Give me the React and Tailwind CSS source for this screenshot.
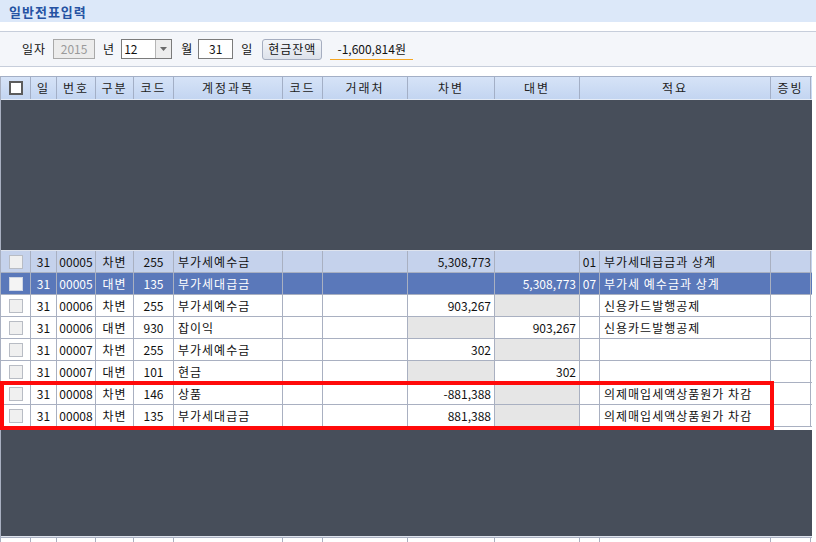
import React from "react";

const COLS =
  "grid grid-cols-[30px_26px_39px_38px_40px_109px_40px_85px_87px_85px_20px_171px_40px]";

const rows = [
  { d: "31", no: "00005", k: "차변", c: "255", acc: "부가세예수금", dr: "5,308,773", cr: "", rc: "01", memo: "부가세대급금과 상계", kind: "light" },
  { d: "31", no: "00005", k: "대변", c: "135", acc: "부가세대급금", dr: "", cr: "5,308,773", rc: "07", memo: "부가세 예수금과 상계", kind: "sel" },
  { d: "31", no: "00006", k: "차변", c: "255", acc: "부가세예수금", dr: "903,267", cr: "", rc: "", memo: "신용카드발행공제", kind: "n" },
  { d: "31", no: "00006", k: "대변", c: "930", acc: "잡이익", dr: "", cr: "903,267", rc: "", memo: "신용카드발행공제", kind: "n" },
  { d: "31", no: "00007", k: "차변", c: "255", acc: "부가세예수금", dr: "302", cr: "", rc: "", memo: "", kind: "n" },
  { d: "31", no: "00007", k: "대변", c: "101", acc: "현금", dr: "", cr: "302", rc: "", memo: "", kind: "n" },
  { d: "31", no: "00008", k: "차변", c: "146", acc: "상품", dr: "-881,388", cr: "", rc: "", memo: "의제매입세액상품원가 차감", kind: "n" },
  { d: "31", no: "00008", k: "차변", c: "135", acc: "부가세대급금", dr: "881,388", cr: "", rc: "", memo: "의제매입세액상품원가 차감", kind: "n" },
];

function Cell({ children, align = "center", gray = false, ko = false }) {
  const a =
    align === "right"
      ? "justify-end pr-[3px]"
      : align === "left"
      ? "justify-start pl-[4px]"
      : "justify-center";
  return (
    <div
      className={`h-full flex items-center border-r border-[#a9b0c1] whitespace-nowrap overflow-hidden ${a} ${
        gray ? "bg-[#e6e6e6]" : ""
      } ${ko ? "tracking-[1px]" : ""}`}
    >
      {children}
    </div>
  );
}

function Row({ r }) {
  const bg =
    r.kind === "light"
      ? "bg-[#c5d2ec] text-[#111]"
      : r.kind === "sel"
      ? "bg-[#5a78ba] text-white"
      : "bg-white text-[#111]";
  const plain = r.kind === "n";
  return (
    <div className={`${COLS} h-[22px] border-b border-[#a9b0c1] ${bg}`}>
      <Cell>
        <span
          className={`w-[14px] h-[14px] border block ${
            r.kind === "sel" ? "border-[#d0d6e4] bg-[#f4f4f4]" : "border-[#b8bcc4] bg-[#f0f0f0]"
          }`}
        />
      </Cell>
      <Cell>{r.d}</Cell>
      <Cell>{r.no}</Cell>
      <Cell ko>{r.k}</Cell>
      <Cell>{r.c}</Cell>
      <Cell align="left" ko>
        {r.acc}
      </Cell>
      <Cell />
      <Cell />
      <Cell align="right" gray={plain && r.dr === ""}>
        {r.dr}
      </Cell>
      <Cell align="right" gray={plain && r.cr === ""}>
        {r.cr}
      </Cell>
      <Cell>{r.rc}</Cell>
      <Cell align="left" ko>
        {r.memo}
      </Cell>
      <Cell />
    </div>
  );
}

function HeadCell({ children, span2 = false }) {
  return (
    <div
      className={`h-full flex items-center justify-center border-r border-[#a3afc6] tracking-[2px] ${
        span2 ? "col-span-2" : ""
      }`}
    >
      {children}
    </div>
  );
}

export default function App() {
  return (
    <div className="w-[816px] h-[542px] overflow-hidden bg-white font-['Noto_Sans_CJK_KR',sans-serif] text-[12px] leading-none text-[#111]">
      {/* title bar */}
      <div className="h-[22px] bg-[#dce8f9] flex items-center pl-[9px]">
        <span className="text-[13px] font-bold text-[#2553a3] tracking-[1px]">일반전표입력</span>
      </div>
      <div className="h-[9px]" />
      {/* toolbar */}
      <div className="h-[36px] bg-[#f4f6fa] border-y border-[#c7cedb] flex items-center pl-[22px]">
        <span className="tracking-[1px]">일자</span>
        <div className="ml-[7px] w-[42px] h-[20px] border border-[#a9a9a9] bg-[#ececec] text-[#9a9a9a] flex items-center justify-center">
          2015
        </div>
        <span className="ml-[8px]">년</span>
        <div className="ml-[7px] w-[51px] h-[20px] border border-[#7b7b7b] bg-white flex">
          <div className="flex-1 flex items-center pl-[2px]">12</div>
          <div className="w-[16px] h-full border-l border-[#b5b5b5] bg-[#ededed] flex items-center justify-center">
            <svg width="7" height="4" viewBox="0 0 7 4">
              <path d="M0 0 L7 0 L3.5 4 Z" fill="#6a6a6a" />
            </svg>
          </div>
        </div>
        <span className="ml-[9px]">월</span>
        <div className="ml-[6px] w-[35px] h-[20px] border border-[#7b7b7b] bg-white flex items-center justify-center">
          31
        </div>
        <span className="ml-[8px]">일</span>
        <div className="ml-[10px] w-[60px] h-[21px] border border-[#a6aec0] rounded-[3px] bg-gradient-to-b from-[#f3f5f9] to-[#dde2eb] flex items-center justify-center tracking-[1px]">
          현금잔액
        </div>
        <div className="ml-[8px] w-[83px] h-[21px] border-b border-[#f5a623] flex items-center justify-center">
          -1,600,814원
        </div>
      </div>
      <div className="h-[9px]" />
      {/* table */}
      <div className="relative w-[812px] border-l border-[#a9b0c1]">
        <div
          className={`${COLS} h-[24px] bg-gradient-to-b from-[#d6e3f7] to-[#c3d5f1] border-t border-[#a3afc6] border-b border-b-[#e4ebf6] text-[#222]`}
        >
          <HeadCell>
            <span className="w-[14px] h-[14px] border-2 border-[#5c5c5c] bg-white block" />
          </HeadCell>
          <HeadCell>일</HeadCell>
          <HeadCell>번호</HeadCell>
          <HeadCell>구분</HeadCell>
          <HeadCell>코드</HeadCell>
          <HeadCell>계정과목</HeadCell>
          <HeadCell>코드</HeadCell>
          <HeadCell>거래처</HeadCell>
          <HeadCell>차변</HeadCell>
          <HeadCell>대변</HeadCell>
          <HeadCell span2>적요</HeadCell>
          <HeadCell>증빙</HeadCell>
        </div>
        <div className="h-[151px] bg-[#474e5a] border-b border-[#dfe4ee]" />
        {rows.map((r, i) => (
          <Row key={i} r={r} />
        ))}
        <div className="h-[3px] bg-white" />
        <div className="h-[107px] bg-[#474e5a] border-b border-[#dfe4ee]" />
        <div className={`${COLS} h-[22px] border-t border-[#a9b0c1]`}>
          {Array.from({ length: 13 }).map((_, i) => (
            <div key={i} className="h-full border-r border-[#a9b0c1]" />
          ))}
        </div>
        {/* red annotation box */}
        <div className="absolute left-[-1px] top-[305px] w-[774px] h-[49px] border-[4px] border-[#ff0a0a] pointer-events-none" />
      </div>
    </div>
  );
}
